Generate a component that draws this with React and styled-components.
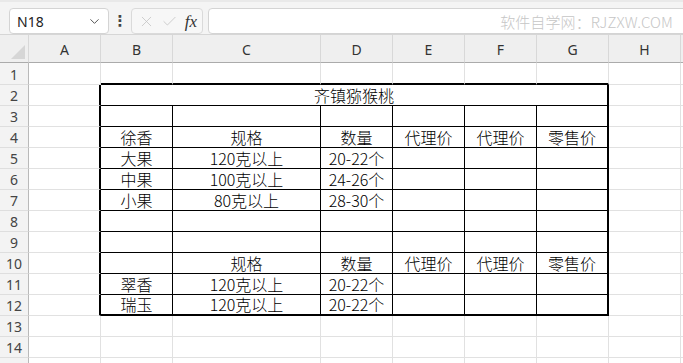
import styled, { createGlobalStyle } from "styled-components";
import { ChevronDown, X, Check } from "lucide-react";

const GlobalStyle = createGlobalStyle`
  html, body {
    margin: 0;
    padding: 0;
    background: #ffffff;
    overflow: hidden;
  }
  * {
    box-sizing: border-box;
  }
`;

const COLS = ["A", "B", "C", "D", "E", "F", "G", "H", "I"];
const ROW_COUNT = 15;

// table content, keyed by row number, columns B..G
const DATA = {
  4: ["徐香", "规格", "数量", "代理价", "代理价", "零售价"],
  5: ["大果", "120克以上", "20-22个", "", "", ""],
  6: ["中果", "100克以上", "24-26个", "", "", ""],
  7: ["小果", "80克以上", "28-30个", "", "", ""],
  10: ["", "规格", "数量", "代理价", "代理价", "零售价"],
  11: ["翠香", "120克以上", "20-22个", "", "", ""],
  12: ["瑞玉", "120克以上", "20-22个", "", "", ""],
};

const GRID = "1px solid #e1e1e1";
const THIN = "1px solid #000";
const THICK = "2px solid #000";

const inTable = (r, c) => r >= 2 && r <= 12 && c >= 1 && c <= 6;

const rightBorder = (r, c) => {
  if (inTable(r, c)) return c === 6 ? THICK : THIN;
  if (c === 0 && r >= 2 && r <= 12) return THICK;
  return GRID;
};

const bottomBorder = (r, c) => {
  if (inTable(r, c)) return r === 12 ? THICK : THIN;
  if (r === 1 && c >= 1 && c <= 6) return THICK;
  return GRID;
};

const App = () => {
  const cells = [];
  for (let r = 1; r <= ROW_COUNT; r++) {
    cells.push(<RowHead key={`h${r}`}>{r}</RowHead>);
    for (let c = 0; c < COLS.length; c++) {
      if (r === 2 && c >= 2 && c <= 6) continue;
      if (r === 2 && c === 1) {
        cells.push(
          <Cell key={`${r}-${c}`} $span={6} $right={THICK} $bottom={THIN}>
            齐镇猕猴桃
          </Cell>
        );
        continue;
      }
      const text = DATA[r] && c >= 1 && c <= 6 ? DATA[r][c - 1] : "";
      cells.push(
        <Cell
          key={`${r}-${c}`}
          $right={rightBorder(r, c)}
          $bottom={bottomBorder(r, c)}
        >
          {text}
        </Cell>
      );
    }
  }

  return (
    <>
      <GlobalStyle />
      <Window>
        <FormulaBar>
          <NameBox>
            <span>N18</span>
            <ChevronDown size={15} strokeWidth={1.6} color="#555" />
          </NameBox>
          <Dots>⋮</Dots>
          <ActionBox>
            <X size={17} strokeWidth={1.1} color="#c2c2c2" />
            <Check size={17} strokeWidth={1.1} color="#c2c2c2" />
            <Fx>fx</Fx>
          </ActionBox>
          <FormulaInput>
            <Watermark>软件自学网：RJZXW.COM</Watermark>
          </FormulaInput>
        </FormulaBar>
        <Sheet>
          <Corner>
            <CornerMark />
          </Corner>
          {COLS.map((col) => (
            <ColHead key={col}>{col}</ColHead>
          ))}
          {cells}
        </Sheet>
      </Window>
    </>
  );
};

export default App;

const Window = styled.div`
  width: 683px;
  height: 363px;
  display: flex;
  flex-direction: column;
  overflow: hidden;
  background: #ffffff;
`;

const FormulaBar = styled.div`
  height: 35px;
  flex-shrink: 0;
  display: flex;
  align-items: stretch;
  padding: 6px 0 0 9px;
  background: #f4f4f4;
  border-top: 2px solid #e9e9e9;
  border-bottom: 1px solid #d6d6d6;
`;

const NameBox = styled.div`
  width: 100px;
  height: 26px;
  display: flex;
  align-items: center;
  justify-content: space-between;
  padding: 0 6px 0 7px;
  background: #fff;
  border: 1px solid #d4d4d4;
  border-radius: 4px;
  font-family: "Noto Sans", "Liberation Sans", sans-serif;
  font-size: 14px;
  color: #222;
`;

const Dots = styled.div`
  width: 22px;
  height: 26px;
  display: flex;
  align-items: center;
  justify-content: center;
  font-family: "DejaVu Sans", sans-serif;
  font-size: 15px;
  font-weight: bold;
  color: #444;
`;

const ActionBox = styled.div`
  width: 72px;
  height: 26px;
  display: flex;
  align-items: center;
  justify-content: space-between;
  padding: 0 5px 0 6px;
  background: #f7f7f7;
  border: 1px solid #dadada;
  border-radius: 4px;
`;

const Fx = styled.span`
  font-family: "Liberation Serif", "DejaVu Serif", serif;
  font-style: italic;
  font-size: 17px;
  color: #333;
  line-height: 1;
`;

const FormulaInput = styled.div`
  flex: 1;
  height: 26px;
  margin-left: 5px;
  margin-right: -10px;
  display: flex;
  align-items: center;
  justify-content: flex-end;
  padding-right: 19px;
  background: #fff;
  border: 1px solid #d4d4d4;
  border-radius: 4px;
`;

const Watermark = styled.span`
  font-family: "Noto Sans CJK SC", "Noto Sans", sans-serif;
  font-size: 15px;
  font-weight: 300;
  color: #c6c6c6;
  letter-spacing: 0.1px;
`;

const Sheet = styled.div`
  display: grid;
  grid-template-columns: 29px 72px 72px 148px 72px 72px 72px 72px 72px 72px;
  grid-template-rows: 28px 22px repeat(14, 21px);
  font-family: "Noto Sans CJK SC", "Noto Sans", sans-serif;
`;

const Corner = styled.div`
  position: relative;
  background: #efefef;
  border-right: 1px solid #d8d8d8;
  border-bottom: 1px solid #ababab;
`;

const CornerMark = styled.div`
  position: absolute;
  right: 3px;
  bottom: 3px;
  width: 0;
  height: 0;
  border-left: 14px solid transparent;
  border-bottom: 14px solid #d6d6d6;
`;

const ColHead = styled.div`
  display: flex;
  align-items: center;
  justify-content: center;
  padding-top: 2px;
  background: #efefef;
  border-right: 1px solid #d8d8d8;
  border-bottom: 1px solid #ababab;
  font-family: "Noto Sans", "Open Sans", sans-serif;
  font-size: 14px;
  color: #333;
`;

const RowHead = styled.div`
  display: flex;
  align-items: center;
  justify-content: center;
  padding-top: 1px;
  background: #f3f3f3;
  border-right: 1px solid #b9b9b9;
  border-bottom: 1px solid #dedede;
  font-family: "Noto Sans", "Open Sans", sans-serif;
  font-size: 14px;
  color: #444;
`;

const Cell = styled.div`
  grid-column: span ${(p) => p.$span || 1};
  display: flex;
  align-items: flex-end;
  justify-content: center;
  overflow: hidden;
  white-space: nowrap;
  padding-bottom: 1px;
  border-right: ${(p) => p.$right};
  border-bottom: ${(p) => p.$bottom};
  font-size: 16px;
  font-weight: 300;
  line-height: 18px;
  color: #000;
`;
